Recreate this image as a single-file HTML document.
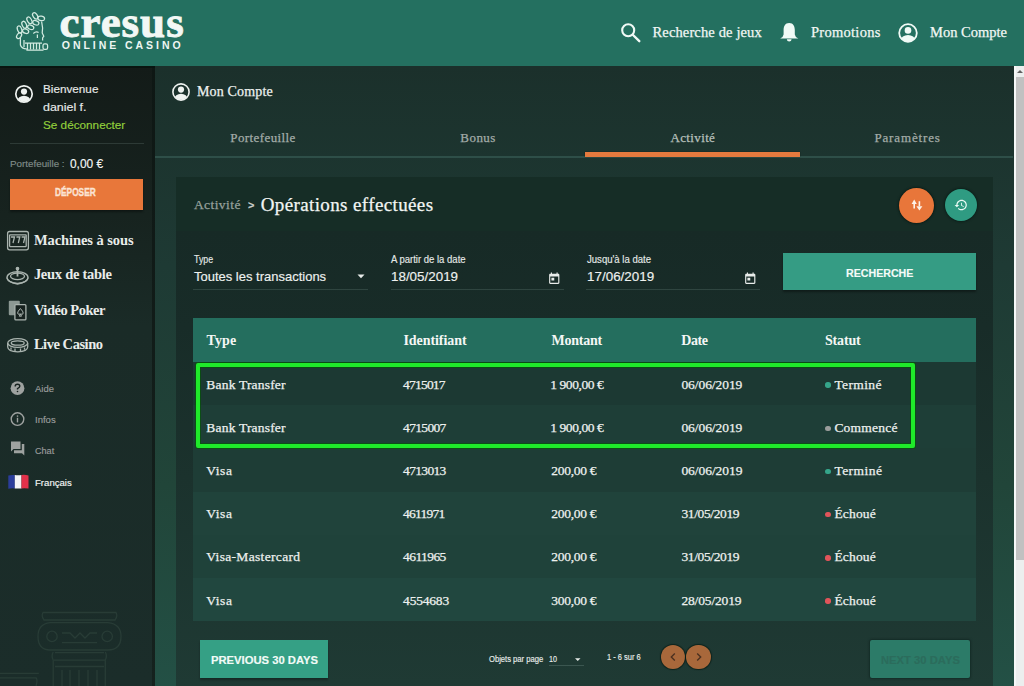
<!DOCTYPE html>
<html><head><meta charset="utf-8">
<style>
*{margin:0;padding:0;box-sizing:border-box}
html,body{width:1024px;height:686px;overflow:hidden;background:#1e3631}
body{position:relative;font-family:"Liberation Sans",sans-serif;color:#fff}
.a{position:absolute}
.t{position:absolute;white-space:nowrap}
.dot{position:absolute;width:5.4px;height:5.4px;border-radius:50%}
#hdr{left:0;top:0;width:1024px;height:66px;background:#247060}
#side{left:0;top:66px;width:155px;height:620px;background:linear-gradient(to bottom,#131b18 0px,#17231f 150px,#1a2b27 260px,#1b2d2a 620px)}
#main{left:155px;top:66px;width:860px;height:620px;background:linear-gradient(to bottom,#1b302b 0px,#1e3a34 200px,#214539 420px,#235045 620px)}
#card{left:176px;top:177px;width:817px;height:509px;background:linear-gradient(to bottom,#172a26 54px,#182c28 150px,#1b322d 300px,#1f3a34 509px)}
#scroll{left:1014px;top:66px;width:10px;height:620px;background:#eceeee;border-left:2px solid #f6f8f8}
#thumb{left:1016px;top:77px;width:8px;height:483px;background:#c1c1c1}
.sep{position:absolute;height:1px}
</style></head><body>
<div id="hdr" class="a"></div>
<div id="side" class="a"></div>
<div id="main" class="a"></div>
<div id="card" class="a"></div>
<div class="a" style="left:176px;top:177px;width:817px;height:54px;background:#162d26"></div>
<div class="a" style="left:152px;top:66px;width:3px;height:620px;background:linear-gradient(to bottom,#0e1714,#15221e)"></div>
<div class="a" style="left:0;top:66px;width:155px;height:2px;background:#08140f;opacity:.8"></div>
<div id="scroll" class="a"></div>
<div id="thumb" class="a"></div>
<div class="a" style="left:1017px;top:70px;width:0;height:0;border-left:3px solid transparent;border-right:3px solid transparent;border-bottom:3px solid #606060"></div>

<!-- sidebar separator -->
<div class="sep" style="left:10px;top:143px;width:134px;background:#2d3a36"></div>
<!-- deposer button -->
<div class="a" style="left:10px;top:179px;width:133px;height:31px;background:#e8773a;box-shadow:0 2px 2px rgba(0,0,0,.35)"></div>

<!-- tabs line -->
<div class="sep" style="left:155px;top:156px;width:858px;height:1.6px;background:#2e4f48"></div>
<div class="a" style="left:585px;top:152px;width:215px;height:5px;background:#e47a3e;box-shadow:0 0 1px rgba(0,0,0,.5)"></div>

<!-- orange & teal circles -->
<div class="a" style="left:898.5px;top:187.5px;width:35px;height:35px;border-radius:50%;background:#e8763a;box-shadow:0 0 2px 1px rgba(5,20,15,.6)"></div>
<div class="a" style="left:944.5px;top:189px;width:32px;height:32px;border-radius:50%;background:#2f9b82;box-shadow:0 0 2px 1px rgba(5,25,18,.6)"></div>

<!-- filter underlines -->
<div class="sep" style="left:193px;top:288.5px;width:175px;height:1.2px;background:#2f4540"></div>
<div class="sep" style="left:391px;top:288.5px;width:173px;height:1.2px;background:#2f4540"></div>
<div class="sep" style="left:586px;top:288.5px;width:174px;height:1.2px;background:#2f4540"></div>
<!-- recherche button -->
<div class="a" style="left:783px;top:253px;width:193px;height:37px;background:#359c84;box-shadow:0 2px 2px rgba(0,0,0,.35)"></div>

<!-- table -->
<div class="a" style="left:193px;top:318px;width:783px;height:44px;background:#246e5e"></div>
<div class="a" style="left:193px;top:362px;width:783px;height:43.2px;background:#1c3933"></div>
<div class="a" style="left:193px;top:405.2px;width:783px;height:43.2px;background:#1e3e37"></div>
<div class="a" style="left:193px;top:448.4px;width:783px;height:43.2px;background:#1e3d36"></div>
<div class="a" style="left:193px;top:491.6px;width:783px;height:43.2px;background:#20433b"></div>
<div class="a" style="left:193px;top:534.8px;width:783px;height:43.2px;background:#1f423a"></div>
<div class="a" style="left:193px;top:578px;width:783px;height:43.4px;background:#21473f"></div>

<!-- green highlight -->
<div class="a" style="left:196px;top:363px;width:719px;height:85px;border:4px solid #1fea2a;border-radius:2px;box-shadow:0 0 0 1px rgba(0,90,0,.6), inset 0 0 0 1px rgba(0,90,0,.6)"></div>

<!-- bottom -->
<div class="a" style="left:200px;top:640px;width:128px;height:38px;background:#35a085;box-shadow:0 2px 2px rgba(0,0,0,.3)"></div>
<div class="sep" style="left:549px;top:665px;width:35px;background:#3b5650"></div>
<div class="a" style="left:660.5px;top:644.7px;width:24.5px;height:24.5px;border-radius:50%;background:#a8683b;box-shadow:0 0 1px 1px rgba(5,25,18,.7)"></div>
<div class="a" style="left:686.3px;top:644.7px;width:24.5px;height:24.5px;border-radius:50%;background:#a8683b;box-shadow:0 0 1px 1px rgba(5,25,18,.7)"></div>
<div class="a" style="left:870px;top:640px;width:100px;height:38px;background:#2c7b68;border-radius:2px;box-shadow:0 0 2px 1px rgba(10,30,25,.5)"></div>

<!-- logo head -->
<svg class="a" style="left:0;top:0" width="60" height="66" viewBox="0 0 60 66">
 <g fill="none" stroke="#d2eae0" stroke-width="1.25">
  <ellipse cx="19.6" cy="29.5" rx="2.1" ry="3.7" transform="rotate(-20 19.6 29.5)"/>
  <ellipse cx="24.3" cy="24.8" rx="2.1" ry="3.7" transform="rotate(-25 24.3 24.8)"/>
  <ellipse cx="29.4" cy="20.3" rx="2.1" ry="3.6" transform="rotate(-30 29.4 20.3)"/>
  <ellipse cx="35.2" cy="15.9" rx="2.1" ry="3.5" transform="rotate(-35 35.2 15.9)"/>
  <ellipse cx="41.2" cy="18.4" rx="3.4" ry="2.2" transform="rotate(10 41.2 18.4)"/>
  <ellipse cx="19.1" cy="35.7" rx="3.2" ry="2.1" transform="rotate(-55 19.1 35.7)"/>
  <ellipse cx="25.6" cy="31.2" rx="3.2" ry="2.1" transform="rotate(20 25.6 31.2)"/>
  <ellipse cx="30.7" cy="27.3" rx="3.2" ry="2.1" transform="rotate(20 30.7 27.3)"/>
  <ellipse cx="35.8" cy="22.8" rx="3.2" ry="2.1" transform="rotate(20 35.8 22.8)"/>
  <path d="M41.6 21.5 L42.6 28 L42.2 33 L43.8 36.2 L42.6 38 L42.6 40.5"/>
  <path d="M33.3 33.5 Q36 31 38.6 32.5"/>
  <path d="M37.4 34.5 L37.4 38"/>
  <path d="M20.4 37.5 L20.4 45 Q21.5 48.8 27 49 L27 50 L43.5 50"/>
  <path d="M24 40 L24 47 M27.5 43 L27.5 49.5 M30.5 43 L30.5 49.5 M33.5 43 L33.5 49.5 M36.5 43 L36.5 49.5 M39.5 43 L39.5 49.5 M25 43 L42 43"/>
  <rect x="43" y="43.8" width="4.6" height="5.6" rx="1.6"/>
 </g>
</svg>
<!-- logo text -->
<div class="t" style="left:59.5px;top:-1px;font-family:'Liberation Serif';font-weight:700;font-size:45px;line-height:46px;letter-spacing:1px;color:#f2f8f5;-webkit-text-stroke:0.9px #f2f8f5">cresus</div>
<div class="t" style="left:61.8px;top:39.6px;font-family:'Liberation Sans';font-weight:700;font-size:10.5px;line-height:10.5px;letter-spacing:2.95px;color:#eef6f2">ONLINE CASINO</div>

<!-- search -->
<svg class="a" style="left:615px;top:18px" width="30" height="28" viewBox="615 18 30 28">
 <circle cx="628.2" cy="30.2" r="6" fill="none" stroke="#f0faf6" stroke-width="2.1"/>
 <line x1="633" y1="35" x2="639.3" y2="41.2" stroke="#f0faf6" stroke-width="2.4" stroke-linecap="round"/>
</svg>
<!-- bell -->
<svg class="a" style="left:775px;top:18px" width="30" height="28" viewBox="775 18 30 28">
 <path d="M789.2 23 C785 23 783.6 26.5 783.6 30 L783.6 34.5 Q783.4 36.8 780.2 38.6 L798.3 38.6 Q795 36.8 794.8 34.5 L794.8 30 C794.8 26.5 793.4 23 789.2 23 Z" fill="#f0faf6"/>
 <path d="M786.8 39.3 L791.6 39.3 Q791.4 41.5 789.2 41.5 Q787 41.5 786.8 39.3Z" fill="#f0faf6"/>
</svg>
<!-- account icons -->
<svg class="a" style="left:897px;top:22px" width="22" height="22" viewBox="-11 -11 22 22">
 <defs><clipPath id="cc1"><circle r="8.6"/></clipPath></defs>
 <circle r="8.8" fill="none" stroke="#f0faf6" stroke-width="1.8"/>
 <circle cx="0" cy="-2.6" r="3.3" fill="#f0faf6"/>
 <ellipse cx="0" cy="7.5" rx="7.2" ry="5.6" fill="#f0faf6" clip-path="url(#cc1)"/>
</svg>
<svg class="a" style="left:12.5px;top:82.5px" width="22" height="22" viewBox="-11 -11 22 22">
 <defs><clipPath id="cc2"><circle r="7.8"/></clipPath></defs>
 <circle r="8.2" fill="none" stroke="#eef2f0" stroke-width="1.7"/>
 <circle cx="0" cy="-2.4" r="3.1" fill="#eef2f0"/>
 <ellipse cx="0" cy="7" rx="6.6" ry="5.2" fill="#eef2f0" clip-path="url(#cc2)"/>
</svg>
<svg class="a" style="left:170.3px;top:81.4px" width="22" height="22" viewBox="-11 -11 22 22">
 <defs><clipPath id="cc3"><circle r="7.8"/></clipPath></defs>
 <circle r="8.1" fill="none" stroke="#eef2f0" stroke-width="1.6"/>
 <circle cx="0" cy="-2.4" r="3.1" fill="#eef2f0"/>
 <ellipse cx="0" cy="7" rx="6.6" ry="5.2" fill="#eef2f0" clip-path="url(#cc3)"/>
</svg>

<!-- sidebar menu icons -->
<svg class="a" style="left:0;top:225px" width="32" height="130" viewBox="0 225 32 130">
 <g fill="none" stroke="#aab4af" stroke-width="1.3">
  <rect x="7.6" y="231.5" width="20.8" height="18.3" rx="2"/>
  <rect x="9.6" y="234.8" width="16.6" height="11.8" rx="0.5"/>
  <path d="M11 237 L14.5 237 L13 243 M16.4 237 L19.8 237 L18.3 243 M21.6 237 L25 237 L23.5 243"/>
  <ellipse cx="17.5" cy="277.5" rx="10.5" ry="5.8"/>
  <ellipse cx="17.5" cy="276.3" rx="7" ry="3.3"/>
  <path d="M17.5 268 L17.5 276.5" stroke-width="1.8"/>
  <circle cx="17.5" cy="268.5" r="1.2" fill="#aab4af"/>
  <path d="M7 277.5 Q7 282 17.5 284 Q28 282 28 277.5"/>
 </g>
 <rect x="8.8" y="300.8" width="11" height="14.5" rx="1" fill="#8c9893"/>
 <rect x="14.9" y="304.6" width="11" height="15.3" rx="1" fill="#17221f" stroke="#aab4af" stroke-width="1.3"/>
 <path d="M20.4 308.5 Q17.6 311.5 17.6 313 Q17.6 315 20.4 314 Q23.2 315 23.2 313 Q23.2 311.5 20.4 308.5Z M20.4 314 L19.3 316.2 L21.5 316.2Z" fill="none" stroke="#aab4af" stroke-width="1"/>
 <g fill="none" stroke="#aab4af" stroke-width="1.3">
  <ellipse cx="17.7" cy="343" rx="10" ry="4.3"/>
  <ellipse cx="17.7" cy="343" rx="6.5" ry="2.2"/>
  <path d="M7.7 343 L7.7 347 Q8 351.5 17.7 351.8 Q27.4 351.5 27.7 347 L27.7 343"/>
  <path d="M11 349.8 L11 347.5 M15 351 L15 348.5 M20.5 351 L20.5 348.5 M24.5 349.8 L24.5 347.5"/>
 </g>
</svg>

<!-- help / info / chat / flag -->
<svg class="a" style="left:0;top:376px" width="32" height="116" viewBox="0 376 32 116">
 <circle cx="17.5" cy="388.2" r="6.9" fill="#9ea2a0"/>
 <path d="M15.2 386.4 Q15.2 384.3 17.5 384.3 Q19.8 384.3 19.8 386.3 Q19.8 387.6 17.5 388.6 L17.5 389.6" fill="none" stroke="#17221f" stroke-width="1.4"/>
 <circle cx="17.5" cy="391.5" r="0.8" fill="#17221f"/>
 <circle cx="17.5" cy="419.1" r="6.3" fill="none" stroke="#9ea2a0" stroke-width="1.4"/>
 <rect x="16.8" y="417.8" width="1.4" height="4.6" fill="#9ea2a0"/>
 <rect x="16.8" y="415.4" width="1.4" height="1.4" fill="#9ea2a0"/>
 <path d="M11 441.5 L20.5 441.5 L20.5 449 L13.5 449 L11 451.5Z" fill="#9ea2a0"/>
 <path d="M21.8 444 L24.3 444 L24.3 455.5 L22 453.2 L14 453.2 L14 450.3 L21.8 450.3Z" fill="#9ea2a0"/>
 <path d="M8.3 475.5 Q11 474.6 14.8 475 L14.8 488.4 Q11 488 8.3 488.8Z" fill="#2b3d9b"/>
 <path d="M14.8 475 Q18 475.4 21.5 475 L21.5 488.4 Q18 488.8 14.8 488.4Z" fill="#f4f4f6"/>
 <path d="M21.5 475 Q25 474.6 28.5 475.4 L28.5 488.6 Q25 488 21.5 488.4Z" fill="#e2314a"/>
</svg>

<!-- column (faint) -->
<svg class="a" style="left:0;top:590px" width="155" height="96" viewBox="0 590 155 96">
 <g fill="none" stroke="#283c36" stroke-width="1.3">
  <path d="M43 612.5 L116 612.5 Q118 616 115 620 L44 620 Q41 616 43 612.5Z"/>
  <path d="M50 622.6 L108 622.6 Q121 624 121 636.3 Q121 650 108 650 L50 650 Q38 650 38 636.3 Q38 624 50 622.6Z"/>
  <circle cx="52" cy="636.4" r="5.2"/>
  <circle cx="107.2" cy="636.4" r="5.2"/>
  <path d="M62 633 L70 633 L75 638 L80 633 L85 638 L90 633 L97 633"/>
  <path d="M62 642.7 L97 642.7"/>
  <path d="M55 652.7 L104 652.7 M54 660.2 L105 660.2 M55 666.5 L104 666.5"/>
  <path d="M53.2 652 Q51 656 53.2 660 L53.2 686 M105.3 652 Q107.5 656 105.3 660 L105.3 686"/>
  <path d="M62 670 L62 686 M70 670 L70 686 M79 670 L79 686 M88 670 L88 686 M97 670 L97 686"/>
  <path d="M0 673.4 L38.8 673.4 M0 677.8 L36 677.8 Q38 680 36 686"/>
 </g>
</svg>
<!-- circle button icons -->
<svg class="a" style="left:900px;top:190px" width="30" height="30" viewBox="900 190 30 30">
 <path d="M911.6 204 L914.2 199.6 L916.8 204 Z M913.4 203.5 L915 203.5 L915 208.6 L913.4 208.6 Z" fill="#fdf1e6"/>
 <path d="M916.4 206.2 L919.4 210.6 L922.4 206.2 Z M918.6 201.3 L920.2 201.3 L920.2 206.6 L918.6 206.6 Z" fill="#fdf1e6"/>
</svg>
<svg class="a" style="left:953.5px;top:198px" width="14" height="14" viewBox="0 0 24 24">
 <path d="M13 3c-4.97 0-9 4.03-9 9H1l3.89 3.89.07.14L9 12H6c0-3.87 3.13-7 7-7s7 3.13 7 7-3.13 7-7 7c-1.93 0-3.68-.79-4.94-2.06l-1.42 1.42C8.27 19.99 10.510 21 13 21c4.97 0 9-4.03 9-9s-4.03-9-9-9zm-1 5v5l4.28 2.54.72-1.21-3.5-2.08V8H12z" fill="#eafaf4"/>
</svg>

<!-- dropdown arrows & calendars -->
<svg class="a" style="left:357px;top:274px" width="8" height="5" viewBox="0 0 8 5"><path d="M0.5 0.5 L7.5 0.5 L4 4.2Z" fill="#e8ecea"/></svg>
<svg class="a" style="left:575px;top:657.5px" width="6" height="4" viewBox="0 0 6 4"><path d="M0 0.3 L5.5 0.3 L2.75 3Z" fill="#e8ecea"/></svg>
<svg class="a" style="left:547.5px;top:271.5px" width="12.5" height="12.5" viewBox="2 0 20 22">
 <path d="M19 3h-1V1h-2v2H8V1H6v2H5c-1.11 0-1.99.9-1.99 2L3 19c0 1.1.89 2 2 2h14c1.1 0 2-.9 2-2V5c0-1.1-.9-2-2-2zm0 16H5V8h14v11zM7 10h5v5H7z" fill="#e8ecea"/>
</svg>
<svg class="a" style="left:744.2px;top:271.5px" width="12.5" height="12.5" viewBox="2 0 20 22">
 <path d="M19 3h-1V1h-2v2H8V1H6v2H5c-1.11 0-1.99.9-1.99 2L3 19c0 1.1.89 2 2 2h14c1.1 0 2-.9 2-2V5c0-1.1-.9-2-2-2zm0 16H5V8h14v11zM7 10h5v5H7z" fill="#e8ecea"/>
</svg>
<!-- chevrons -->
<svg class="a" style="left:664.5px;top:649px" width="16" height="16" viewBox="0 0 24 24"><path d="M15.41 7.41L14 6l-6 6 6 6 1.41-1.41L10.83 12z" fill="#4a3020"/></svg>
<svg class="a" style="left:690.5px;top:649px" width="16" height="16" viewBox="0 0 24 24"><path d="M10 6L8.59 7.41 13.17 12l-4.58 4.59L10 18l6-6z" fill="#4a3020"/></svg>

<div class="dot" style="left:825.3px;top:382.4px;background:#35a58a"></div><div class="dot" style="left:825.3px;top:425.6px;background:#9a9c9b"></div><div class="dot" style="left:825.3px;top:468.8px;background:#35a58a"></div><div class="dot" style="left:825.3px;top:512.0px;background:#e0545a"></div><div class="dot" style="left:825.3px;top:555.2px;background:#e0545a"></div><div class="dot" style="left:825.3px;top:598.4px;background:#e0545a"></div>
<div class="t" style="left:652.50px;top:25.00px;-webkit-text-stroke:0.25px #f2f7f4;font-family:'Liberation Serif';font-weight:400;font-size:14.5px;line-height:14.5px;letter-spacing:0.136px;color:#f2f7f4;">Recherche de jeux</div>
<div class="t" style="left:811.00px;top:25.00px;-webkit-text-stroke:0.25px #f2f7f4;font-family:'Liberation Serif';font-weight:400;font-size:14.5px;line-height:14.5px;letter-spacing:0.275px;color:#f2f7f4;">Promotions</div>
<div class="t" style="left:930.00px;top:25.00px;-webkit-text-stroke:0.25px #f2f7f4;font-family:'Liberation Serif';font-weight:400;font-size:14.5px;line-height:14.5px;letter-spacing:0.000px;color:#f2f7f4;">Mon Compte</div>
<div class="t" style="left:43.30px;top:83.80px;-webkit-text-stroke:0.15px #e6e9e8;font-family:'Liberation Sans';font-weight:400;font-size:11.5px;line-height:11.5px;letter-spacing:0.000px;color:#e6e9e8;transform:scaleX(1.0194);transform-origin:0.00px 0;">Bienvenue</div>
<div class="t" style="left:43.30px;top:101.60px;-webkit-text-stroke:0.15px #e6e9e8;font-family:'Liberation Sans';font-weight:400;font-size:11.5px;line-height:11.5px;letter-spacing:0.000px;color:#e6e9e8;transform:scaleX(1.0803);transform-origin:0.00px 0;">daniel f.</div>
<div class="t" style="left:43.30px;top:120.00px;-webkit-text-stroke:0.15px #93d13b;font-family:'Liberation Sans';font-weight:400;font-size:11.5px;line-height:11.5px;letter-spacing:0.000px;color:#93d13b;transform:scaleX(1.0207);transform-origin:0.00px 0;">Se déconnecter</div>
<div class="t" style="left:9.50px;top:160.00px;-webkit-text-stroke:0.15px #7f8b87;font-family:'Liberation Sans';font-weight:400;font-size:9px;line-height:9px;letter-spacing:0.000px;color:#7f8b87;transform:scaleX(1.0903);transform-origin:0.00px 0;">Portefeuille :</div>
<div class="t" style="left:69.70px;top:156.60px;-webkit-text-stroke:0.15px #f4f6f5;font-family:'Liberation Sans';font-weight:400;font-size:13px;line-height:13px;letter-spacing:0.000px;color:#f4f6f5;transform:scaleX(0.9157);transform-origin:0.00px 0;">0,00 €</div>
<div class="t" style="left:55.40px;top:187.70px;-webkit-text-stroke:0.15px #fbe3d3;font-family:'Liberation Sans';font-weight:700;font-size:10px;line-height:10px;letter-spacing:0.000px;color:#fbe3d3;transform:scaleX(0.8333);transform-origin:0.00px 0;-webkit-text-stroke:0.35px #fbe3d3;">DÉPOSER</div>
<div class="t" style="left:33.90px;top:232.70px;font-family:'Liberation Serif';font-weight:700;font-size:14.5px;line-height:14.5px;letter-spacing:-0.076px;color:#e9ecea;">Machines à sous</div>
<div class="t" style="left:33.90px;top:267.00px;font-family:'Liberation Serif';font-weight:700;font-size:14.5px;line-height:14.5px;letter-spacing:-0.268px;color:#e9ecea;">Jeux de table</div>
<div class="t" style="left:33.90px;top:302.60px;font-family:'Liberation Serif';font-weight:700;font-size:14.5px;line-height:14.5px;letter-spacing:-0.484px;color:#e9ecea;">Vidéo Poker</div>
<div class="t" style="left:33.90px;top:337.40px;font-family:'Liberation Serif';font-weight:700;font-size:14.5px;line-height:14.5px;letter-spacing:-0.457px;color:#e9ecea;">Live Casino</div>
<div class="t" style="left:35.00px;top:383.80px;-webkit-text-stroke:0.15px #9a9d9c;font-family:'Liberation Sans';font-weight:400;font-size:9.5px;line-height:9.5px;letter-spacing:0.000px;color:#9a9d9c;transform:scaleX(0.9930);transform-origin:0.00px 0;">Aide</div>
<div class="t" style="left:35.00px;top:414.60px;-webkit-text-stroke:0.15px #9a9d9c;font-family:'Liberation Sans';font-weight:400;font-size:9.5px;line-height:9.5px;letter-spacing:0.000px;color:#9a9d9c;transform:scaleX(1.0026);transform-origin:0.00px 0;">Infos</div>
<div class="t" style="left:35.00px;top:446.30px;-webkit-text-stroke:0.15px #9a9d9c;font-family:'Liberation Sans';font-weight:400;font-size:9.5px;line-height:9.5px;letter-spacing:0.000px;color:#9a9d9c;transform:scaleX(0.9546);transform-origin:0.00px 0;">Chat</div>
<div class="t" style="left:35.00px;top:477.90px;-webkit-text-stroke:0.15px #f4f6f5;font-family:'Liberation Sans';font-weight:400;font-size:9.5px;line-height:9.5px;letter-spacing:0.000px;color:#f4f6f5;transform:scaleX(1.0088);transform-origin:0.00px 0;">Français</div>
<div class="t" style="left:196.90px;top:85.20px;-webkit-text-stroke:0.25px #eef2f0;font-family:'Liberation Serif';font-weight:400;font-size:14px;line-height:14px;letter-spacing:0.182px;color:#eef2f0;">Mon Compte</div>
<div class="t" style="left:230.30px;top:131.00px;-webkit-text-stroke:0.25px #a3aca8;font-family:'Liberation Serif';font-weight:400;font-size:13px;line-height:13px;letter-spacing:0.402px;color:#a3aca8;">Portefeuille</div>
<div class="t" style="left:460.30px;top:131.00px;-webkit-text-stroke:0.25px #a3aca8;font-family:'Liberation Serif';font-weight:400;font-size:13px;line-height:13px;letter-spacing:0.457px;color:#a3aca8;">Bonus</div>
<div class="t" style="left:670.50px;top:131.00px;-webkit-text-stroke:0.25px #b8c0bc;font-family:'Liberation Serif';font-weight:400;font-size:13px;line-height:13px;letter-spacing:0.356px;color:#b8c0bc;">Activité</div>
<div class="t" style="left:874.40px;top:131.00px;-webkit-text-stroke:0.25px #a3aca8;font-family:'Liberation Serif';font-weight:400;font-size:13px;line-height:13px;letter-spacing:0.856px;color:#a3aca8;">Paramètres</div>
<div class="t" style="left:193.90px;top:198.00px;-webkit-text-stroke:0.25px #97a19d;font-family:'Liberation Serif';font-weight:400;font-size:13.5px;line-height:13.5px;letter-spacing:0.429px;color:#97a19d;">Activité</div>
<div class="t" style="left:248.00px;top:200.00px;-webkit-text-stroke:0.15px #c9cfcc;font-family:'Liberation Sans';font-weight:700;font-size:11px;line-height:11px;letter-spacing:0.000px;color:#c9cfcc;">&gt;</div>
<div class="t" style="left:260.70px;top:194.80px;-webkit-text-stroke:0.25px #f2f5f3;font-family:'Liberation Serif';font-weight:400;font-size:19px;line-height:19px;letter-spacing:0.381px;color:#f2f5f3;">Opérations effectuées</div>
<div class="t" style="left:194.30px;top:254.50px;-webkit-text-stroke:0.15px #e4e8e6;font-family:'Liberation Sans';font-weight:400;font-size:10px;line-height:10px;letter-spacing:0.000px;color:#e4e8e6;transform:scaleX(0.8816);transform-origin:0.00px 0;">Type</div>
<div class="t" style="left:194.30px;top:270.00px;-webkit-text-stroke:0.15px #eef1ef;font-family:'Liberation Sans';font-weight:400;font-size:13px;line-height:13px;letter-spacing:0.000px;color:#eef1ef;transform:scaleX(0.9990);transform-origin:0.00px 0;">Toutes les transactions</div>
<div class="t" style="left:390.80px;top:254.50px;-webkit-text-stroke:0.15px #e4e8e6;font-family:'Liberation Sans';font-weight:400;font-size:10px;line-height:10px;letter-spacing:0.000px;color:#e4e8e6;transform:scaleX(0.9512);transform-origin:0.00px 0;">A partir de la date</div>
<div class="t" style="left:390.80px;top:270.00px;-webkit-text-stroke:0.15px #eef1ef;font-family:'Liberation Sans';font-weight:400;font-size:13px;line-height:13px;letter-spacing:0.000px;color:#eef1ef;transform:scaleX(1.0303);transform-origin:0.00px 0;">18/05/2019</div>
<div class="t" style="left:586.80px;top:254.50px;-webkit-text-stroke:0.15px #e4e8e6;font-family:'Liberation Sans';font-weight:400;font-size:10px;line-height:10px;letter-spacing:0.000px;color:#e4e8e6;transform:scaleX(0.9570);transform-origin:0.00px 0;">Jusqu'à la date</div>
<div class="t" style="left:586.80px;top:270.00px;-webkit-text-stroke:0.15px #eef1ef;font-family:'Liberation Sans';font-weight:400;font-size:13px;line-height:13px;letter-spacing:0.000px;color:#eef1ef;transform:scaleX(1.0334);transform-origin:0.00px 0;">17/06/2019</div>
<div class="t" style="left:846.10px;top:268.00px;-webkit-text-stroke:0.15px #f4fbf8;font-family:'Liberation Sans';font-weight:700;font-size:11.5px;line-height:11.5px;letter-spacing:0.000px;color:#f4fbf8;transform:scaleX(0.9252);transform-origin:0.00px 0;">RECHERCHE</div>
<div class="t" style="left:206.50px;top:333.70px;font-family:'Liberation Serif';font-weight:700;font-size:14px;line-height:14px;letter-spacing:0.138px;color:#f4f7f5;">Type</div>
<div class="t" style="left:403.40px;top:333.70px;font-family:'Liberation Serif';font-weight:700;font-size:14px;line-height:14px;letter-spacing:-0.052px;color:#f4f7f5;">Identifiant</div>
<div class="t" style="left:551.60px;top:333.70px;font-family:'Liberation Serif';font-weight:700;font-size:14px;line-height:14px;letter-spacing:-0.241px;color:#f4f7f5;">Montant</div>
<div class="t" style="left:681.20px;top:333.70px;font-family:'Liberation Serif';font-weight:700;font-size:14px;line-height:14px;letter-spacing:-0.391px;color:#f4f7f5;">Date</div>
<div class="t" style="left:825.00px;top:333.70px;font-family:'Liberation Serif';font-weight:700;font-size:14px;line-height:14px;letter-spacing:-0.179px;color:#f4f7f5;">Statut</div>
<div class="t" style="left:206.30px;top:377.60px;-webkit-text-stroke:0.25px #eef1ef;font-family:'Liberation Serif';font-weight:400;font-size:13.5px;line-height:13.5px;letter-spacing:0.198px;color:#eef1ef;">Bank Transfer</div>
<div class="t" style="left:403.10px;top:377.60px;-webkit-text-stroke:0.25px #eef1ef;font-family:'Liberation Serif';font-weight:400;font-size:13.5px;line-height:13.5px;letter-spacing:-0.800px;color:#eef1ef;">4715017</div>
<div class="t" style="left:550.30px;top:377.60px;-webkit-text-stroke:0.25px #eef1ef;font-family:'Liberation Serif';font-weight:400;font-size:13.5px;line-height:13.5px;letter-spacing:-0.436px;color:#eef1ef;">1 900,00 €</div>
<div class="t" style="left:681.40px;top:377.60px;-webkit-text-stroke:0.25px #eef1ef;font-family:'Liberation Serif';font-weight:400;font-size:13.5px;line-height:13.5px;letter-spacing:-0.061px;color:#eef1ef;">06/06/2019</div>
<div class="t" style="left:834.40px;top:377.60px;-webkit-text-stroke:0.25px #eef1ef;font-family:'Liberation Serif';font-weight:400;font-size:13.5px;line-height:13.5px;letter-spacing:0.368px;color:#eef1ef;">Terminé</div>
<div class="t" style="left:206.30px;top:420.80px;-webkit-text-stroke:0.25px #eef1ef;font-family:'Liberation Serif';font-weight:400;font-size:13.5px;line-height:13.5px;letter-spacing:0.198px;color:#eef1ef;">Bank Transfer</div>
<div class="t" style="left:403.10px;top:420.80px;-webkit-text-stroke:0.25px #eef1ef;font-family:'Liberation Serif';font-weight:400;font-size:13.5px;line-height:13.5px;letter-spacing:-0.667px;color:#eef1ef;">4715007</div>
<div class="t" style="left:550.30px;top:420.80px;-webkit-text-stroke:0.25px #eef1ef;font-family:'Liberation Serif';font-weight:400;font-size:13.5px;line-height:13.5px;letter-spacing:-0.436px;color:#eef1ef;">1 900,00 €</div>
<div class="t" style="left:681.40px;top:420.80px;-webkit-text-stroke:0.25px #eef1ef;font-family:'Liberation Serif';font-weight:400;font-size:13.5px;line-height:13.5px;letter-spacing:-0.061px;color:#eef1ef;">06/06/2019</div>
<div class="t" style="left:834.40px;top:420.80px;-webkit-text-stroke:0.25px #eef1ef;font-family:'Liberation Serif';font-weight:400;font-size:13.5px;line-height:13.5px;letter-spacing:0.216px;color:#eef1ef;">Commencé</div>
<div class="t" style="left:206.30px;top:464.00px;-webkit-text-stroke:0.25px #eef1ef;font-family:'Liberation Serif';font-weight:400;font-size:13.5px;line-height:13.5px;letter-spacing:0.552px;color:#eef1ef;">Visa</div>
<div class="t" style="left:403.10px;top:464.00px;-webkit-text-stroke:0.25px #eef1ef;font-family:'Liberation Serif';font-weight:400;font-size:13.5px;line-height:13.5px;letter-spacing:-0.667px;color:#eef1ef;">4713013</div>
<div class="t" style="left:551.30px;top:464.00px;-webkit-text-stroke:0.25px #eef1ef;font-family:'Liberation Serif';font-weight:400;font-size:13.5px;line-height:13.5px;letter-spacing:-0.300px;color:#eef1ef;">200,00 €</div>
<div class="t" style="left:681.40px;top:464.00px;-webkit-text-stroke:0.25px #eef1ef;font-family:'Liberation Serif';font-weight:400;font-size:13.5px;line-height:13.5px;letter-spacing:-0.050px;color:#eef1ef;">06/06/2019</div>
<div class="t" style="left:834.40px;top:464.00px;-webkit-text-stroke:0.25px #eef1ef;font-family:'Liberation Serif';font-weight:400;font-size:13.5px;line-height:13.5px;letter-spacing:0.468px;color:#eef1ef;">Terminé</div>
<div class="t" style="left:206.30px;top:507.20px;-webkit-text-stroke:0.25px #eef1ef;font-family:'Liberation Serif';font-weight:400;font-size:13.5px;line-height:13.5px;letter-spacing:0.552px;color:#eef1ef;">Visa</div>
<div class="t" style="left:403.10px;top:507.20px;-webkit-text-stroke:0.25px #eef1ef;font-family:'Liberation Serif';font-weight:400;font-size:13.5px;line-height:13.5px;letter-spacing:-0.767px;color:#eef1ef;">4611971</div>
<div class="t" style="left:551.30px;top:507.20px;-webkit-text-stroke:0.25px #eef1ef;font-family:'Liberation Serif';font-weight:400;font-size:13.5px;line-height:13.5px;letter-spacing:-0.300px;color:#eef1ef;">200,00 €</div>
<div class="t" style="left:681.40px;top:507.20px;-webkit-text-stroke:0.25px #eef1ef;font-family:'Liberation Serif';font-weight:400;font-size:13.5px;line-height:13.5px;letter-spacing:-0.372px;color:#eef1ef;">31/05/2019</div>
<div class="t" style="left:834.40px;top:507.20px;-webkit-text-stroke:0.25px #eef1ef;font-family:'Liberation Serif';font-weight:400;font-size:13.5px;line-height:13.5px;letter-spacing:0.182px;color:#eef1ef;">Échoué</div>
<div class="t" style="left:206.30px;top:550.40px;-webkit-text-stroke:0.25px #eef1ef;font-family:'Liberation Serif';font-weight:400;font-size:13.5px;line-height:13.5px;letter-spacing:0.329px;color:#eef1ef;">Visa-Mastercard</div>
<div class="t" style="left:403.10px;top:550.40px;-webkit-text-stroke:0.25px #eef1ef;font-family:'Liberation Serif';font-weight:400;font-size:13.5px;line-height:13.5px;letter-spacing:-0.583px;color:#eef1ef;">4611965</div>
<div class="t" style="left:551.30px;top:550.40px;-webkit-text-stroke:0.25px #eef1ef;font-family:'Liberation Serif';font-weight:400;font-size:13.5px;line-height:13.5px;letter-spacing:-0.300px;color:#eef1ef;">200,00 €</div>
<div class="t" style="left:681.40px;top:550.40px;-webkit-text-stroke:0.25px #eef1ef;font-family:'Liberation Serif';font-weight:400;font-size:13.5px;line-height:13.5px;letter-spacing:-0.372px;color:#eef1ef;">31/05/2019</div>
<div class="t" style="left:834.40px;top:550.40px;-webkit-text-stroke:0.25px #eef1ef;font-family:'Liberation Serif';font-weight:400;font-size:13.5px;line-height:13.5px;letter-spacing:0.182px;color:#eef1ef;">Échoué</div>
<div class="t" style="left:206.30px;top:593.60px;-webkit-text-stroke:0.25px #eef1ef;font-family:'Liberation Serif';font-weight:400;font-size:13.5px;line-height:13.5px;letter-spacing:0.552px;color:#eef1ef;">Visa</div>
<div class="t" style="left:403.10px;top:593.60px;-webkit-text-stroke:0.25px #eef1ef;font-family:'Liberation Serif';font-weight:400;font-size:13.5px;line-height:13.5px;letter-spacing:-0.200px;color:#eef1ef;">4554683</div>
<div class="t" style="left:551.30px;top:593.60px;-webkit-text-stroke:0.25px #eef1ef;font-family:'Liberation Serif';font-weight:400;font-size:13.5px;line-height:13.5px;letter-spacing:-0.300px;color:#eef1ef;">300,00 €</div>
<div class="t" style="left:681.40px;top:593.60px;-webkit-text-stroke:0.25px #eef1ef;font-family:'Liberation Serif';font-weight:400;font-size:13.5px;line-height:13.5px;letter-spacing:-0.150px;color:#eef1ef;">28/05/2019</div>
<div class="t" style="left:834.40px;top:593.60px;-webkit-text-stroke:0.25px #eef1ef;font-family:'Liberation Serif';font-weight:400;font-size:13.5px;line-height:13.5px;letter-spacing:0.182px;color:#eef1ef;">Échoué</div>
<div class="t" style="left:210.50px;top:654.70px;-webkit-text-stroke:0.15px #f2fbf7;font-family:'Liberation Sans';font-weight:700;font-size:11px;line-height:11px;letter-spacing:0.000px;color:#f2fbf7;transform:scaleX(1.0210);transform-origin:0.00px 0;">PREVIOUS 30 DAYS</div>
<div class="t" style="left:488.90px;top:654.60px;-webkit-text-stroke:0.15px #e8ecea;font-family:'Liberation Sans';font-weight:400;font-size:8.5px;line-height:8.5px;letter-spacing:0.000px;color:#e8ecea;transform:scaleX(0.8954);transform-origin:0.00px 0;">Objets par page</div>
<div class="t" style="left:548.70px;top:654.60px;-webkit-text-stroke:0.15px #e8ecea;font-family:'Liberation Sans';font-weight:400;font-size:8.5px;line-height:8.5px;letter-spacing:0.000px;color:#e8ecea;transform:scaleX(0.8430);transform-origin:0.00px 0;">10</div>
<div class="t" style="left:606.60px;top:653.00px;-webkit-text-stroke:0.15px #e8ecea;font-family:'Liberation Sans';font-weight:400;font-size:8.5px;line-height:8.5px;letter-spacing:0.000px;color:#e8ecea;transform:scaleX(0.8822);transform-origin:0.00px 0;">1 - 6 sur 6</div>
<div class="t" style="left:880.50px;top:654.50px;-webkit-text-stroke:0.15px #2b6c5c;font-family:'Liberation Sans';font-weight:700;font-size:11px;line-height:11px;letter-spacing:0.000px;color:#2b6c5c;transform:scaleX(1.0221);transform-origin:0.00px 0;">NEXT 30 DAYS</div>
</body></html>
